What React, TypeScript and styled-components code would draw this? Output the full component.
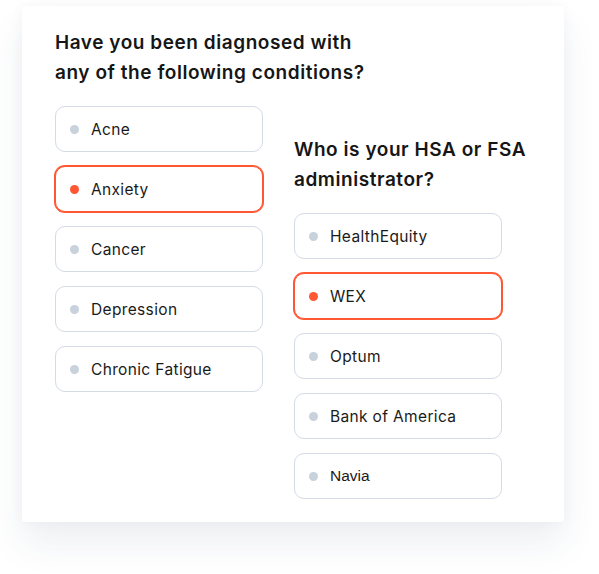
import styled, { createGlobalStyle } from "styled-components";

const GlobalStyle = createGlobalStyle`
  body {
    margin: 0;
    background: #ffffff;
    font-family: Inter, "Open Sans", sans-serif;
  }
`;

const Page = styled.div`
  width: 599px;
  height: 574px;
  padding: 6px 0 0 22px;
  box-sizing: border-box;
`;

const Card = styled.div`
  width: 542px;
  height: 516px;
  box-sizing: border-box;
  padding: 22px 0 0 33px;
  background: #ffffff;
  border-radius: 3px;
  box-shadow: 0 22px 36px rgba(40, 60, 100, 0.08), 0 0 14px rgba(40, 60, 100, 0.04);
  display: grid;
  grid-template-columns: 208px 208px;
  column-gap: 31px;
  align-items: start;
`;

const Column = styled.div<{ offset?: number }>`
  display: flex;
  flex-direction: column;
  margin-top: ${({ offset }) => offset ?? 0}px;
`;

const Question = styled.h2<{ width: number }>`
  margin: 0 0 18px;
  width: ${({ width }) => width}px;
  font-size: 19px;
  font-weight: 600;
  line-height: 30px;
  color: #161616;
  letter-spacing: 0.55px;
`;

const Options = styled.div`
  display: flex;
  flex-direction: column;
  gap: 14px;
`;

const Option = styled.div<{ selected?: boolean }>`
  height: 46px;
  box-sizing: border-box;
  display: flex;
  align-items: center;
  gap: 12px;
  padding-left: 14px;
  border-radius: 10px;
  border: 1px solid ${({ selected }) => (selected ? "#ff5733" : "#d3dbe5")};
  box-shadow: ${({ selected }) => (selected ? "0 0 0 1px #ff5733" : "none")};
  background: #ffffff;
`;

const Dot = styled.span<{ selected?: boolean }>`
  width: 9px;
  height: 9px;
  border-radius: 50%;
  background: ${({ selected }) => (selected ? "#ff5733" : "#c8d1dc")};
`;

const Label = styled.span<{ plain?: boolean }>`
  font-size: 15.5px;
  color: #1a1a1a;
  letter-spacing: ${({ plain }) => (plain ? "0" : "0.35px")};
  font-family: ${({ plain }) =>
    plain ? '"Liberation Sans", Arial, sans-serif' : 'Inter, "Open Sans", sans-serif'};
`;

const conditions = ["Acne", "Anxiety", "Cancer", "Depression", "Chronic Fatigue"];
const admins = ["HealthEquity", "WEX", "Optum", "Bank of America", "Navia"];

export default function App() {
  return (
    <>
      <GlobalStyle />
      <Page>
        <Card>
          <Column>
            <Question width={330}>
              Have you been diagnosed with any of the following conditions?
            </Question>
            <Options>
              {conditions.map((c) => (
                <Option key={c} selected={c === "Anxiety"}>
                  <Dot selected={c === "Anxiety"} />
                  <Label>{c}</Label>
                </Option>
              ))}
            </Options>
          </Column>
          <Column offset={107}>
            <Question width={245}>Who is your HSA or FSA administrator?</Question>
            <Options>
              {admins.map((a) => (
                <Option key={a} selected={a === "WEX"}>
                  <Dot selected={a === "WEX"} />
                  <Label plain={a === "Navia"}>{a}</Label>
                </Option>
              ))}
            </Options>
          </Column>
        </Card>
      </Page>
    </>
  );
}
